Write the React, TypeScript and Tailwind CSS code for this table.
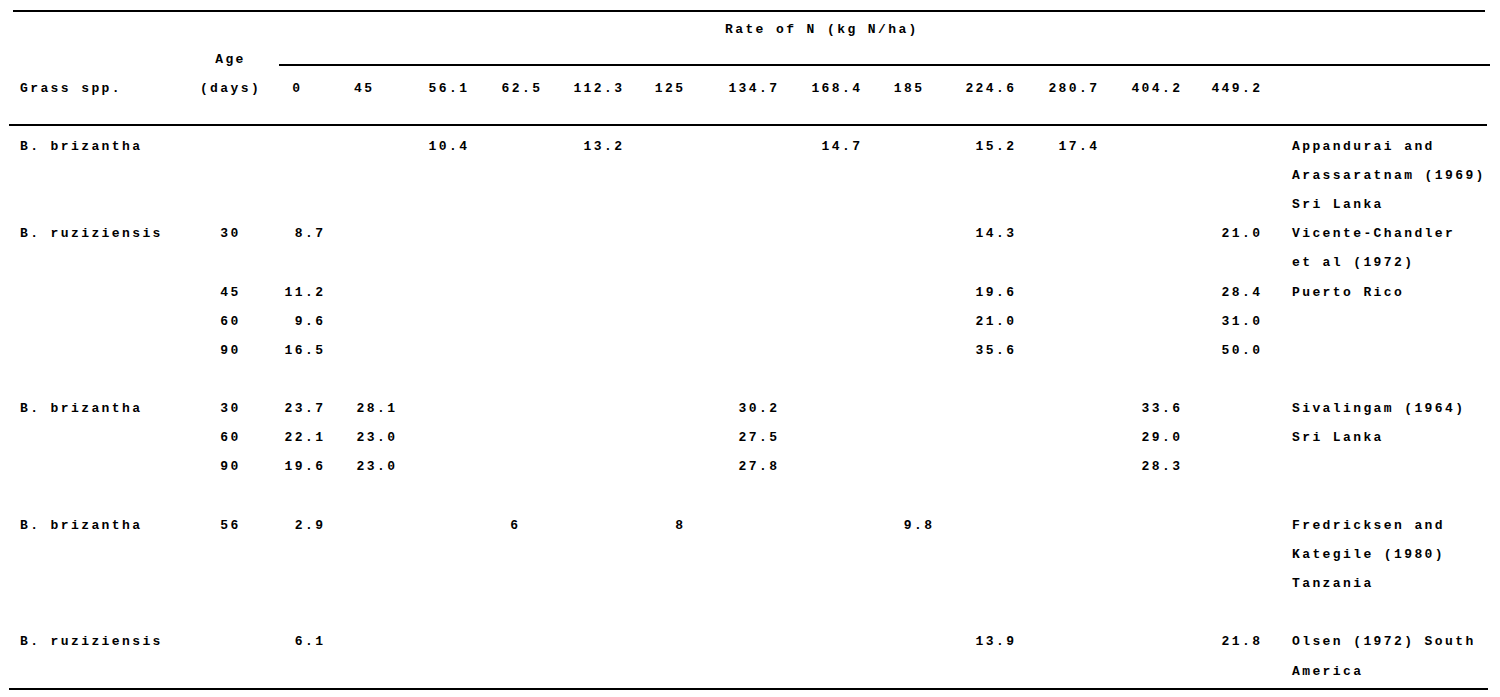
const rates = ['0', '45', '56.1', '62.5', '112.3', '125', '134.7', '168.4', '185', '224.6', '280.7', '404.2', '449.2'];

// typewriter table: a few cells sit off the column edge
const headerPad: Record<string, string> = { '0': 'pr-[23px]', '45': 'pr-[23px]', '185': 'pr-[10px]' };
const valuePad: Record<string, string> = { '62.5': 'pr-[22px]' };

interface Line {
  spp?: string;
  age?: string;
  v?: Record<string, string>;
  ref?: string;
}

const lines: Line[] = [
  { spp: 'B. brizantha', v: { '56.1': '10.4', '112.3': '13.2', '168.4': '14.7', '224.6': '15.2', '280.7': '17.4' }, ref: 'Appandurai and' },
  { ref: 'Arassaratnam (1969)' },
  { ref: 'Sri Lanka' },
  { spp: 'B. ruziziensis', age: '30', v: { '0': '8.7', '224.6': '14.3', '449.2': '21.0' }, ref: 'Vicente-Chandler' },
  { ref: 'et al (1972)' },
  { age: '45', v: { '0': '11.2', '224.6': '19.6', '449.2': '28.4' }, ref: 'Puerto Rico' },
  { age: '60', v: { '0': '9.6', '224.6': '21.0', '449.2': '31.0' } },
  { age: '90', v: { '0': '16.5', '224.6': '35.6', '449.2': '50.0' } },
  {},
  { spp: 'B. brizantha', age: '30', v: { '0': '23.7', '45': '28.1', '134.7': '30.2', '404.2': '33.6' }, ref: 'Sivalingam (1964)' },
  { age: '60', v: { '0': '22.1', '45': '23.0', '134.7': '27.5', '404.2': '29.0' }, ref: 'Sri Lanka' },
  { age: '90', v: { '0': '19.6', '45': '23.0', '134.7': '27.8', '404.2': '28.3' } },
  {},
  { spp: 'B. brizantha', age: '56', v: { '0': '2.9', '62.5': '6', '125': '8', '185': '9.8' }, ref: 'Fredricksen and' },
  { ref: 'Kategile (1980)' },
  { ref: 'Tanzania' },
  {},
  { spp: 'B. ruziziensis', v: { '0': '6.1', '224.6': '13.9', '449.2': '21.8' }, ref: 'Olsen (1972) South' },
  { ref: 'America' },
];

const cols = 'grid grid-cols-[181px_78px_55px_72px_72px_73px_82px_61px_94px_83px_72px_82px_83px_83px_80px_230px]';

function Num({ children, className = '' }: { children: React.ReactNode; className?: string }) {
  return (
    <div className={`text-right ${className}`}>
      <span className="mr-[-2.4px]">{children}</span>
    </div>
  );
}

export default function App() {
  return (
    <div className="min-h-[697px] w-[1500px] bg-white text-black font-['Liberation_Mono','DejaVu_Sans_Mono',monospace] font-bold text-[13px] tracking-[2.4px] leading-[29.17px] whitespace-pre">
      <div className="pt-[10px]">
        <div className="ml-[13px] h-[2px] w-[1472px] bg-black" />
      </div>

      {/* Header */}
      <div className={`${cols} ml-[9px] w-[1481px] pt-[3px] pb-[21px]`}>
        <div className="flex flex-col justify-end pl-[11px]">
          <div>Grass spp.</div>
        </div>
        <div className="flex flex-col justify-end items-center pl-[3px]">
          <div>Age</div>
          <div>(days)</div>
        </div>
        <div className="col-span-14 grid grid-cols-subgrid">
          <div className="col-span-full pl-[457px]">Rate of N (kg N/ha)</div>
          <div className="col-span-full ml-[11px] mt-[20px] mb-[8px] h-[2px] bg-black" />
          {rates.map((r) => (
            <Num key={r} className={headerPad[r] ?? ''}>
              {r}
            </Num>
          ))}
          <div />
        </div>
      </div>
      <div className="ml-[9px] h-[2px] w-[1478px] bg-black" />

      {/* Body */}
      <div className="ml-[9px] w-[1481px] pt-[5.4px] pb-[2.4px]">
        {lines.map((ln, i) => (
          <div key={i} className={`${cols} h-[29.17px]`}>
            <div className="pl-[11px]">{ln.spp ?? ''}</div>
            <div className="text-center pl-[3px]">{ln.age ?? ''}</div>
            {rates.map((r) => (
              <Num key={r} className={valuePad[r] ?? ''}>
                {ln.v?.[r] ?? ''}
              </Num>
            ))}
            <div className="pl-[32px]">{ln.ref ?? ''}</div>
          </div>
        ))}
      </div>
      <div className="ml-[9px] h-[2px] w-[1479px] bg-black" />
    </div>
  );
}
